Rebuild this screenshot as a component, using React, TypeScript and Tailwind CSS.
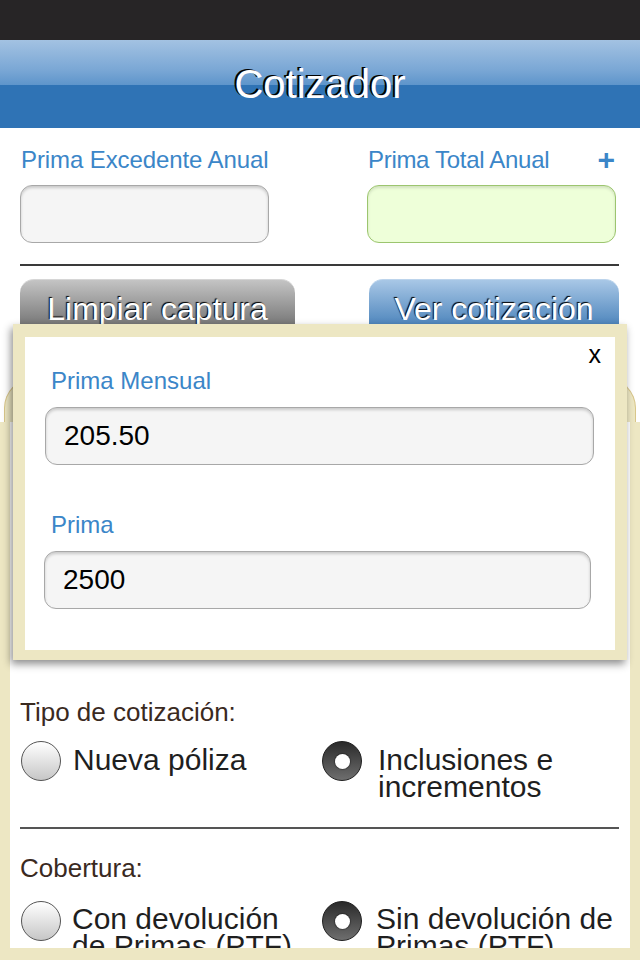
import React from "react";

const Radio = ({ checked }: { checked?: boolean }) =>
  checked ? (
    <div className="w-[40px] h-[40px] shrink-0 rounded-full border border-[#1e1e1e] bg-[linear-gradient(to_bottom,#2a2a2a,#6e6e6e)] flex items-center justify-center">
      <div className="w-[15px] h-[15px] rounded-full bg-white shadow-[0_0_1px_1px_rgba(0,0,0,0.3)]" />
    </div>
  ) : (
    <div className="w-[40px] h-[40px] shrink-0 rounded-full border border-[#555] bg-[linear-gradient(to_bottom,#ffffff,#c6c6c6)]" />
  );

const Field = ({ value, className = "" }: { value?: string; className?: string }) => (
  <div
    className={`h-[58px] rounded-[12px] border border-[#a8a8a8] bg-[#f5f5f5] shadow-[inset_0_2px_3px_rgba(0,0,0,0.18)] flex items-center pl-[18px] text-[28px] text-black ${className}`}
  >
    {value}
  </div>
);

export default function App() {
  return (
    <div className="relative w-[640px] h-[960px] overflow-hidden bg-white font-['Liberation_Sans',Arial,sans-serif]">
      {/* status bar */}
      <div className="h-[40px] bg-[#272526]" />

      {/* header */}
      <header className="h-[88px] flex items-center justify-center bg-[linear-gradient(to_bottom,#a3c2e2_0px,#7aa7d5_30px,#5e95cb_45px,#2f73b5_45px,#2f73b5_100%)]">
        <h1 className="text-[40px] leading-none text-white [text-shadow:-2px_-1px_0_#000]">
          Cotizador
        </h1>
      </header>

      {/* top form */}
      <section className="px-[20px] pt-[18px]">
        <div className="flex">
          <div className="w-[249px]">
            <div className="pl-[1px] whitespace-nowrap text-[24px] leading-[28px] tracking-[-0.1px] text-[#3b86c8]">Prima Excedente Anual</div>
            <Field className="mt-[11px]" />
          </div>
          <div className="ml-[98px] w-[249px]">
            <div className="flex items-center justify-between pl-[1px]">
              <span className="whitespace-nowrap text-[24px] leading-[28px] tracking-[-0.3px] text-[#3b86c8]">Prima Total Anual</span>
              <span className="text-[30px] leading-[28px] font-bold text-[#3b86c8] mr-[1px]">+</span>
            </div>
            <div className="mt-[11px] h-[58px] rounded-[12px] border border-[#9cc56f] bg-[#eeffd9] shadow-[inset_0_2px_3px_rgba(0,0,0,0.12)]" />
          </div>
        </div>

        <div className="mt-[21px] h-[2px] w-[599px] bg-[#3a3a3a]" />

        <div className="mt-[13px] flex">
          <div className="w-[275px] h-[62px] rounded-t-[14px] border-t border-[#d6d6d6] bg-[linear-gradient(to_bottom,#c4c4c4,#5c5c5c)] flex items-center justify-center pb-[4px]">
            <span className="whitespace-nowrap text-[32px] leading-none text-white [text-shadow:-1px_-1px_1px_#000]">Limpiar captura</span>
          </div>
          <div className="ml-[74px] w-[250px] h-[62px] rounded-t-[14px] border-t border-[#bcd4ec] bg-[linear-gradient(to_bottom,#a8c7e6,#2f6fae)] flex items-center justify-center pb-[4px]">
            <span className="whitespace-nowrap text-[32px] leading-none text-white [text-shadow:-1px_-1px_1px_#000]">Ver cotización</span>
          </div>
        </div>
      </section>

      {/* beige panel behind */}
      <div className="mt-[37px] mx-[4px] h-[44px] rounded-t-[30px] border border-b-0 border-[#d8c68a] bg-[#ede7c3]" />
      <div className="bg-[#ede7c3] px-[10px]">
        <div className="h-[526px] overflow-hidden bg-white pl-[10px] pt-[275px]">
          <div className="whitespace-nowrap text-[26px] leading-[30px] text-[#3a2a1f]">Tipo de cotización:</div>
          <div className="mt-[14px] flex pl-[1px]">
            <div className="w-[301px] flex gap-[12px]">
              <Radio />
              <div className="mt-[5px] whitespace-nowrap text-[30px] leading-[27px] text-[#1f1f1f]">Nueva póliza</div>
            </div>
            <div className="flex gap-[16px]">
              <Radio checked />
              <div className="mt-[5px] whitespace-nowrap text-[30px] leading-[27px] text-[#1f1f1f]">
                Inclusiones e<br />incrementos
              </div>
            </div>
          </div>
          <div className="mt-[27px] h-[2px] w-[599px] bg-[#555]" />
          <div className="mt-[24px] whitespace-nowrap text-[26px] leading-[30px] text-[#3a2a1f]">Cobertura:</div>
          <div className="mt-[18px] flex pl-[1px]">
            <div className="w-[301px] flex gap-[11px]">
              <Radio />
              <div className="mt-[4px] whitespace-nowrap text-[30px] leading-[27px] text-[#1f1f1f]">
                Con devolución<br />de Primas (PTF)
              </div>
            </div>
            <div className="flex gap-[14px]">
              <Radio checked />
              <div className="mt-[4px] whitespace-nowrap text-[30px] leading-[27px] text-[#1f1f1f]">
                Sin devolución de<br />Primas (PTF)
              </div>
            </div>
          </div>
        </div>
        <div className="h-[12px]" />
      </div>

      {/* modal overlay */}
      <div className="absolute left-[13px] top-[324px] w-[614px] h-[336px] bg-[#ede7c3] pt-[13px] pb-[10px] px-[12px] shadow-[-2px_4px_8px_rgba(0,0,0,0.45)]">
        <div className="relative h-full bg-white pl-[20px] pr-[21px] pt-[30px]">
          <span className="absolute right-[14px] top-[3px] text-[25px] leading-[28px] text-black">x</span>
          <div className="pl-[6px] text-[24px] leading-[28px] text-[#3b86c8]">Prima Mensual</div>
          <Field className="mt-[12px]" value="205.50" />
          <div className="mt-[46px] pl-[6px] text-[24px] leading-[28px] text-[#3b86c8]">Prima</div>
          <Field className="mt-[12px] -ml-[1px] w-[547px]" value="2500" />
        </div>
      </div>
    </div>
  );
}
